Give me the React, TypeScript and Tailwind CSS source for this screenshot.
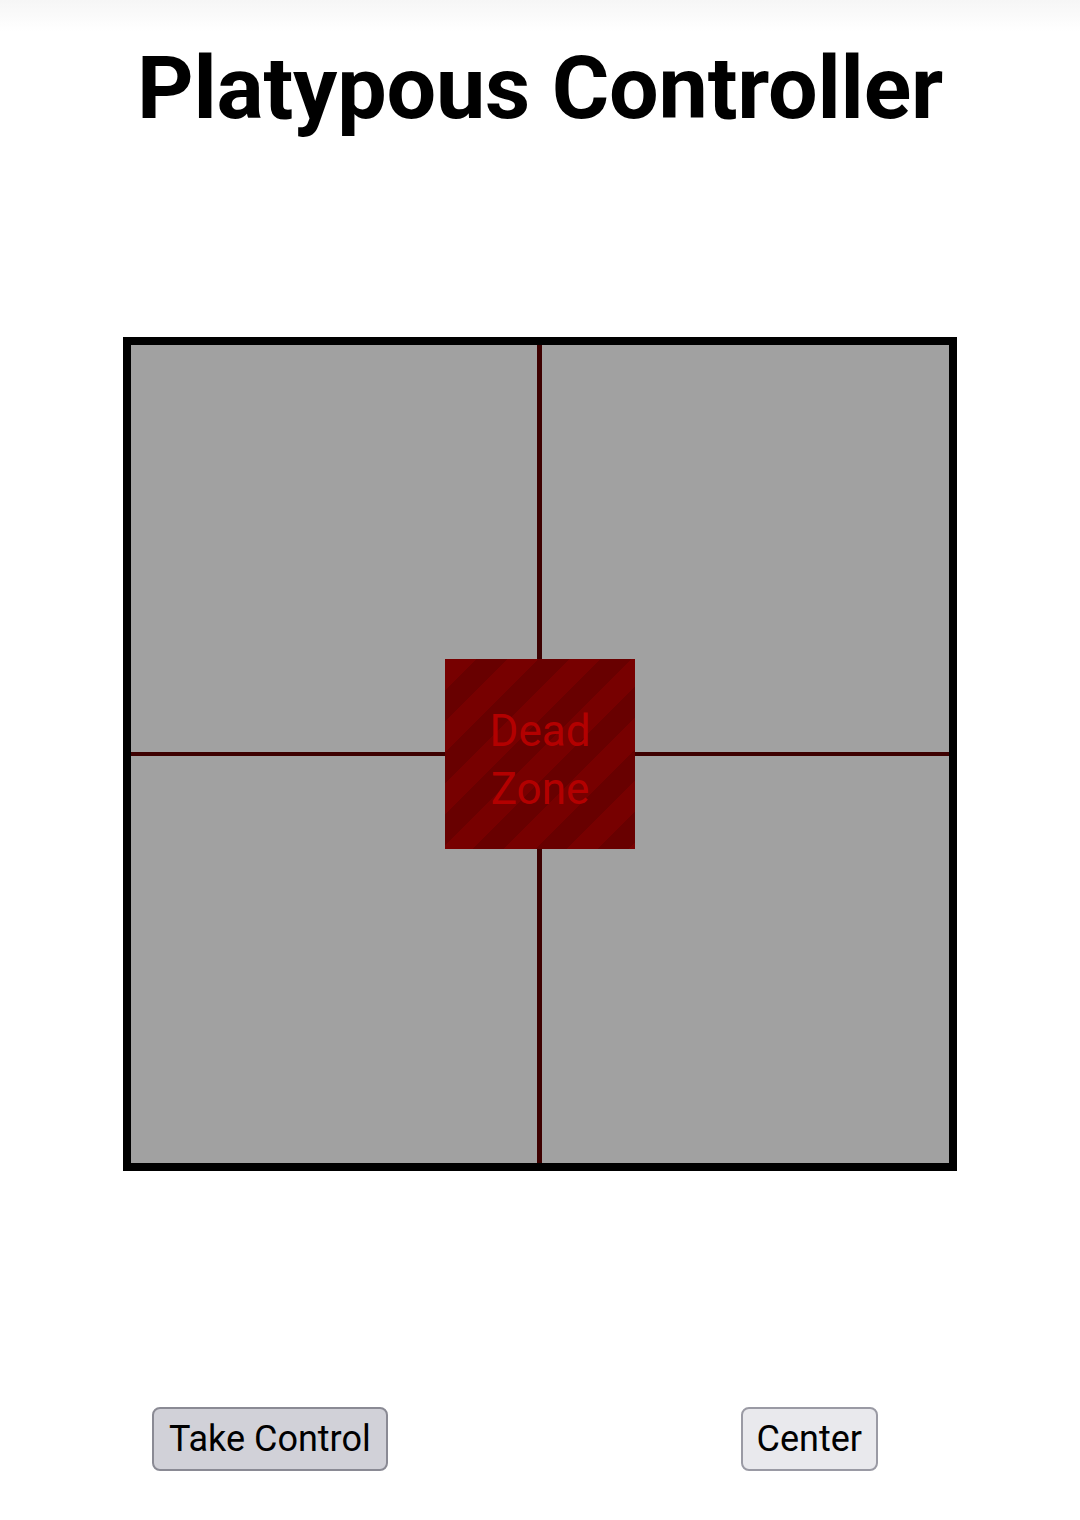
import React from 'react';

export default function App() {
  return (
    <div className="w-[1080px] h-[1520px] bg-white font-['Roboto',sans-serif] flex flex-col items-center bg-[linear-gradient(to_bottom,#f6f6f6_0px,#ffffff_32px)]">
      <h1 className="mt-[38px] text-[88px] leading-[100px] font-bold text-black tracking-[-0.2px]">Platypous Controller</h1>

      <div className="mt-[199px] w-[834px] h-[834px] border-[8px] border-black bg-[#a1a1a1] relative">
        <div className="absolute left-[406px] top-0 bottom-0 w-[5px] bg-[#3d0000]" />
        <div className="absolute top-[407px] left-0 right-0 h-[4px] bg-[#3d0000]" />
        <div className="absolute left-[314px] top-[314px] w-[190px] h-[190px] bg-[repeating-linear-gradient(135deg,#770000_0px,#770000_22px,#680000_22px,#680000_44px)] flex items-center justify-center pt-[12px]">
          <span className="text-[44px] leading-[58px] text-[#b30000] text-center">Dead<br />Zone</span>
        </div>
      </div>

      <div className="mt-[236px] w-full flex justify-between pl-[152px] pr-[202px]">
        <button className="h-[64px] px-[15px] rounded-[8px] border-2 border-[#8a8a94] bg-[#d1d1d8] text-[36px] text-black">Take Control</button>
        <button className="h-[64px] px-[14px] rounded-[8px] border-2 border-[#9a9aa4] bg-[#e9e9ed] text-[36px] text-black">Center</button>
      </div>
    </div>
  );
}
